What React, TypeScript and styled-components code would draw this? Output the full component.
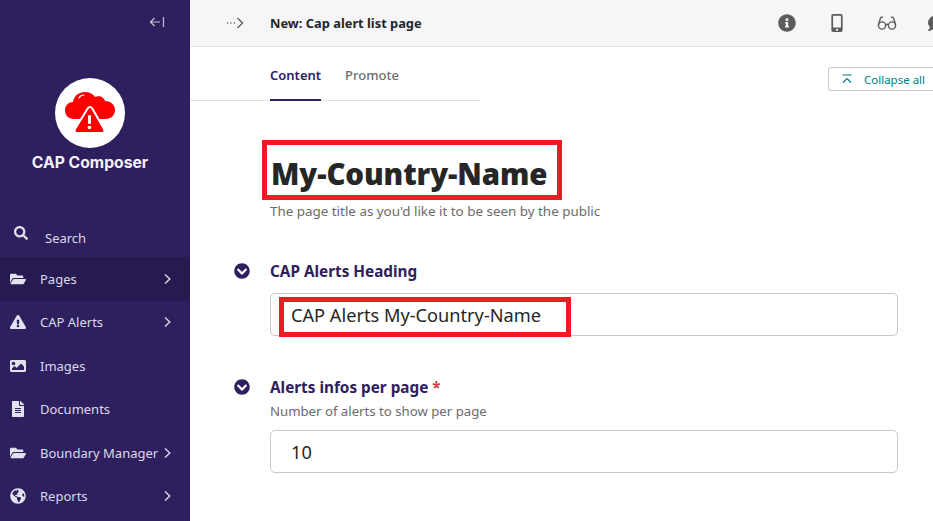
import styled, { createGlobalStyle } from 'styled-components';
import {
  FaChevronCircleDown,
  FaExclamationTriangle,
  FaFileAlt,
  FaFolderOpen,
  FaGlobeAmericas,
  FaImage,
  FaInfoCircle,
  FaMobileAlt,
  FaSearch,
  FaComment,
} from 'react-icons/fa';
import { ReactNode } from 'react';

const GlobalStyle = createGlobalStyle`
  html, body {
    margin: 0;
    height: 100%;
    overflow: hidden;
    background: #fff;
    font-family: "Noto Sans", "Open Sans", sans-serif;
  }
  * { box-sizing: border-box; }
`;

const Shell = styled.div`
  display: flex;
  width: 933px;
  height: 521px;
  overflow: hidden;
`;

const Sidebar = styled.aside`
  width: 190px;
  flex: none;
  background: #2e205e;
  color: #e4e1ee;
  display: flex;
  flex-direction: column;
`;

const ToggleRow = styled.div`
  height: 44px;
  padding-right: 25px;
  display: flex;
  justify-content: flex-end;
  align-items: center;
  color: #c5c0d8;
`;

const Brand = styled.div`
  margin-top: 34px;
  display: flex;
  flex-direction: column;
  align-items: center;
  padding-right: 10px;
`;

const LogoCircle = styled.div`
  width: 70px;
  height: 70px;
  border-radius: 50%;
  background: #fff;
  display: flex;
  align-items: center;
  justify-content: center;
`;

const BrandName = styled.div`
  margin-top: 4px;
  font-family: Inter, sans-serif;
  font-size: 15.7px;
  line-height: 22px;
  font-weight: 700;
  color: #f4f3f8;
  white-space: nowrap;
`;

const SearchRow = styled.div`
  margin-top: 44px;
  height: 39px;
  padding-left: 14px;
  display: flex;
  align-items: flex-start;
  font-size: 13px;
  color: #dcd9e8;
  svg {
    margin-top: 8px;
    width: 14px;
    height: 14px;
    color: #e4e1ee;
  }
  span {
    margin-left: 17px;
    margin-top: 11px;
    line-height: 18px;
  }
`;

const NavList = styled.nav`
  display: flex;
  flex-direction: column;
`;

const NavRow = styled.div<{ $active?: boolean }>`
  height: 43.5px;
  padding-left: 10px;
  padding-right: 18px;
  display: flex;
  align-items: center;
  font-size: 13px;
  color: #dcd9e8;
  background: ${(p) => (p.$active ? '#271a50' : 'transparent')};
`;

const NavIcon = styled.span`
  width: 16px;
  margin-right: 14px;
  display: flex;
  justify-content: center;
  color: #e4e1ee;
  svg {
    width: 16px;
    height: 16px;
  }
`;

const NavLabel = styled.span`
  flex: 1;
  white-space: nowrap;
`;

const Main = styled.main`
  flex: 1;
  min-width: 0;
  display: flex;
  flex-direction: column;
`;

const Header = styled.header`
  height: 47px;
  flex: none;
  background: #f6f6f8;
  border-bottom: 1px solid #e2e2e4;
  display: flex;
  align-items: center;
  padding-left: 36px;
  overflow: hidden;
`;

const Crumb = styled.span`
  width: 44px;
  display: flex;
  color: #6a6a6a;
`;

const PageName = styled.div`
  font-size: 12.85px;
  font-weight: 700;
  color: #262626;
  white-space: nowrap;
`;

const HeaderActions = styled.div`
  margin-left: auto;
  margin-right: -14px;
  display: flex;
  align-items: center;
  gap: 30px;
  color: #5c5c5c;
  svg {
    display: block;
    width: 20px;
    height: 18px;
    flex: none;
  }
`;

const TabsRow = styled.div`
  display: flex;
  justify-content: space-between;
`;

const Tabs = styled.div`
  width: 290px;
  height: 54px;
  padding-left: 80px;
  border-bottom: 1px solid #e2e2e4;
  display: flex;
  gap: 24px;
`;

const Tab = styled.div<{ $active?: boolean }>`
  height: 54px;
  padding-top: 18px;
  font-size: 13px;
  line-height: 20px;
  font-weight: ${(p) => (p.$active ? 600 : 500)};
  color: ${(p) => (p.$active ? '#2e205e' : '#6e6e6e')};
  border-bottom: ${(p) => (p.$active ? '2px solid #2e205e' : 'none')};
`;

const CollapseButton = styled.div`
  margin-top: 20px;
  margin-right: -2px;
  width: 107px;
  height: 24px;
  border: 1px solid #c9c9c9;
  border-right: none;
  border-radius: 3px 0 0 3px;
  display: flex;
  align-items: center;
  padding-left: 12px;
  gap: 11px;
  font-size: 11.5px;
  color: #007d7e;
  white-space: nowrap;
`;

const Content = styled.div`
  padding: 39px 35px 0 72px;
  display: flex;
  flex-direction: column;
`;

const TitleMark = styled.div`
  align-self: flex-start;
  width: 300px;
  height: 60px;
  border: 5px solid #ed1c24;
  padding: 8px 0 0 4px;
  display: flex;
  align-items: center;
`;

const TitleText = styled.h1`
  margin: 0;
  font-size: 29.4px;
  line-height: 40px;
  font-weight: 900;
  color: #262626;
  letter-spacing: -0.1px;
  white-space: nowrap;
`;

const HelpText = styled.div`
  font-size: 13.2px;
  line-height: 20px;
  color: #6b6b6b;
  white-space: nowrap;
`;

const TitleHelp = styled(HelpText)`
  margin-left: 8px;
  margin-top: 1px;
  font-size: 13.4px;
`;

const Field = styled.section<{ $top: number }>`
  margin-top: ${(p) => p.$top}px;
  position: relative;
  padding-left: 8px;
`;

const FieldToggle = styled.span`
  position: absolute;
  left: -28px;
  top: 1px;
  display: flex;
  color: #2e205e;
  svg {
    width: 16px;
    height: 16px;
  }
`;

const FieldLabel = styled.div`
  font-size: 15.3px;
  line-height: 18px;
  font-weight: 700;
  color: #2e205e;
  white-space: nowrap;
  em {
    font-style: normal;
    color: #d23c42;
  }
`;

const FieldHelp = styled(HelpText)`
  margin-top: 5px;
`;

const InputBox = styled.div<{ $gap: number }>`
  margin-top: ${(p) => p.$gap}px;
  width: 628px;
  height: 43px;
  border: 1px solid #c9c9c9;
  border-radius: 5px;
  padding-left: 20px;
  display: flex;
  align-items: center;
  font-size: 18.2px;
  color: #262626;
`;

const InputMark = styled.div`
  margin: 4px 0 0 -12.5px;
  width: 292px;
  height: 40px;
  border: 5px solid #ed1c24;
  padding: 0 0 4px 7.5px;
  display: flex;
  align-items: center;
  white-space: nowrap;
`;

const Chevron = () => (
  <svg width="9" height="12" viewBox="0 0 9 12" fill="none" stroke="#dcd9e8" strokeWidth="1.4">
    <path d="M2 1.5 L6.8 6 L2 10.5" />
  </svg>
);

const CloudAlertLogo = () => (
  <svg width="50" height="44" viewBox="0 0 50 44">
    <path
      fill="#f00"
      d="M9 28 C3 28 0 24 0 19 C0 14 4 11 8 11 C9 4 15 0.5 21 1 C25 1.5 28 3 30 6 C34 4 39 6 40 10 C46 10 50 14 50 19 C50 24 46 28 41 28 Z"
    />
    <path d="M14 7 C15 5 17 4 19 4" fill="none" stroke="#fff" strokeWidth="1.2" strokeLinecap="round" />
    <path
      fill="#f00"
      stroke="#fff"
      strokeWidth="2"
      strokeLinejoin="round"
      d="M23 17 C24 15.5 26 15.5 27 17 L39 38 C40 40.5 39 42 37 42 L12 42 C10 42 9 40.5 10 38 Z"
    />
    <rect x="23" y="24" width="3" height="9" rx="1.3" fill="#fff" />
    <circle cx="24.5" cy="36.5" r="1.8" fill="#fff" />
  </svg>
);

const GlassesIcon = () => (
  <svg viewBox="0 0 20 18" fill="none" stroke="currentColor" strokeWidth="1.4">
    <circle cx="5" cy="11.5" r="3.6" />
    <circle cx="15" cy="11.5" r="3.6" />
    <path d="M8.6 11 C9.3 10 10.7 10 11.4 11" />
    <path d="M1.4 11 L3.5 4 C3.8 3 5 3 6 3.2" />
    <path d="M18.6 11 L16.5 4 C16.2 3 15 3 14 3.2" />
  </svg>
);

type NavItem = { label: string; icon: ReactNode; arrow?: boolean; active?: boolean };

const navItems: NavItem[] = [
  { label: 'Pages', icon: <FaFolderOpen />, arrow: true, active: true },
  { label: 'CAP Alerts', icon: <FaExclamationTriangle />, arrow: true },
  { label: 'Images', icon: <FaImage /> },
  { label: 'Documents', icon: <FaFileAlt /> },
  { label: 'Boundary Manager', icon: <FaFolderOpen />, arrow: true },
  { label: 'Reports', icon: <FaGlobeAmericas />, arrow: true },
];

const App = () => {
  return (
    <Shell>
      <GlobalStyle />
      <Sidebar>
        <ToggleRow>
          <svg width="16" height="12" viewBox="0 0 16 12" fill="none" stroke="currentColor" strokeWidth="1.2">
            <path d="M11 6 H1.5 M5.5 2 L1.5 6 L5.5 10 M14.5 1 V11" />
          </svg>
        </ToggleRow>
        <Brand>
          <LogoCircle>
            <CloudAlertLogo />
          </LogoCircle>
          <BrandName>CAP Composer</BrandName>
        </Brand>
        <SearchRow>
          <FaSearch />
          <span>Search</span>
        </SearchRow>
        <NavList>
          {navItems.map((item) => (
            <NavRow key={item.label} $active={item.active}>
              <NavIcon>{item.icon}</NavIcon>
              <NavLabel>{item.label}</NavLabel>
              {item.arrow && <Chevron />}
            </NavRow>
          ))}
        </NavList>
      </Sidebar>
      <Main>
        <Header>
          <Crumb>
            <svg width="18" height="12" viewBox="0 0 18 12" fill="none" stroke="currentColor" strokeWidth="1.5">
              <path d="M11.5 1 L16.5 6 L11.5 11" />
              <path d="M1 6 H2.2 M4.4 6 H5.6 M7.8 6 H9" />
            </svg>
          </Crumb>
          <PageName>New: Cap alert list page</PageName>
          <HeaderActions>
            <FaInfoCircle />
            <FaMobileAlt />
            <GlassesIcon />
            <FaComment />
          </HeaderActions>
        </Header>
        <TabsRow>
          <Tabs>
            <Tab $active>Content</Tab>
            <Tab>Promote</Tab>
          </Tabs>
          <CollapseButton>
            <svg width="12" height="10" viewBox="0 0 12 10" fill="none" stroke="currentColor" strokeWidth="1.1">
              <path d="M1.5 1 H10.5 M2 8.5 L6 4.5 L10 8.5" />
            </svg>
            Collapse all
          </CollapseButton>
        </TabsRow>
        <Content>
          <TitleMark>
            <TitleText>My-Country-Name</TitleText>
          </TitleMark>
          <TitleHelp>The page title as you'd like it to be seen by the public</TitleHelp>
          <Field $top={41}>
            <FieldToggle>
              <FaChevronCircleDown />
            </FieldToggle>
            <FieldLabel>CAP Alerts Heading</FieldLabel>
            <InputBox $gap={13}>
              <InputMark>CAP Alerts My-Country-Name</InputMark>
            </InputBox>
          </Field>
          <Field $top={42}>
            <FieldToggle>
              <FaChevronCircleDown />
            </FieldToggle>
            <FieldLabel>
              Alerts infos per page <em>*</em>
            </FieldLabel>
            <FieldHelp>Number of alerts to show per page</FieldHelp>
            <InputBox $gap={9}>10</InputBox>
          </Field>
        </Content>
      </Main>
    </Shell>
  );
};

export default App;
